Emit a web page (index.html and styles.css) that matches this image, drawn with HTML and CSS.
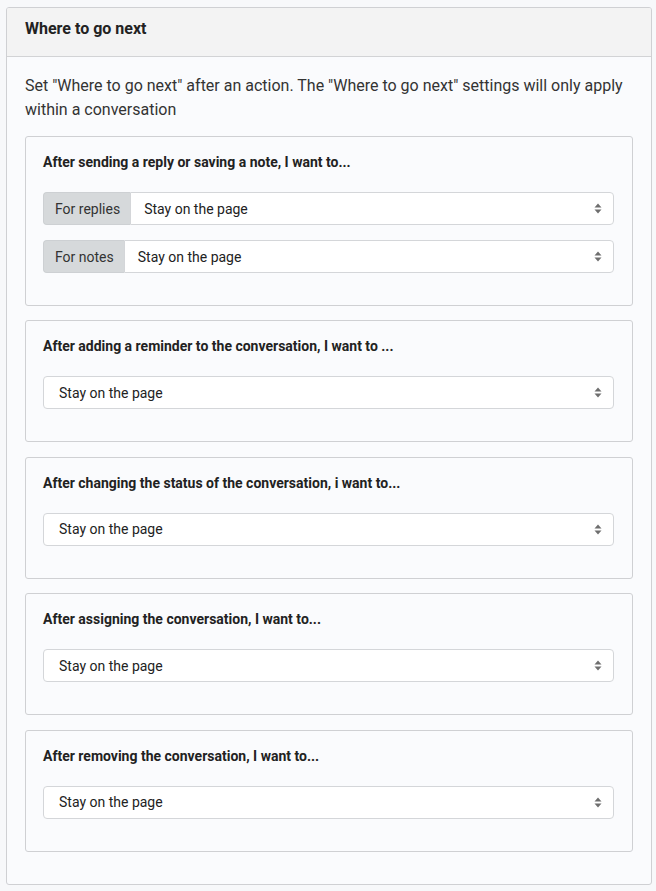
FILE: index.html
```html
<!DOCTYPE html>
<html>
<head>
<meta charset="utf-8">
<link rel="stylesheet" href="styles.css">
</head>
<body>
<div class="panel">
  <div class="panel-head">Where to go next</div>
  <div class="panel-body">
    <p class="intro">Set "Where to go next" after an action. The "Where to go next" settings will only apply within a conversation</p>

    <div class="card">
      <div class="card-title">After sending a reply or saving a note, I want to...</div>
      <div class="group">
        <span class="addon">For replies</span>
        <div class="select joined"><span>Stay on the page</span><svg class="arrow" width="8" height="11" viewBox="0 0 8 11"><path d="M4 0.5L7.5 4.5H0.5Z M4 10.5L7.5 6.5H0.5Z" fill="#6e6e6e"/></svg></div>
      </div>
      <div class="group">
        <span class="addon">For notes</span>
        <div class="select joined"><span>Stay on the page</span><svg class="arrow" width="8" height="11" viewBox="0 0 8 11"><path d="M4 0.5L7.5 4.5H0.5Z M4 10.5L7.5 6.5H0.5Z" fill="#6e6e6e"/></svg></div>
      </div>
    </div>

    <div class="card">
      <div class="card-title">After adding a reminder to the conversation, I want to ...</div>
      <div class="select"><span>Stay on the page</span><svg class="arrow" width="8" height="11" viewBox="0 0 8 11"><path d="M4 0.5L7.5 4.5H0.5Z M4 10.5L7.5 6.5H0.5Z" fill="#6e6e6e"/></svg></div>
    </div>

    <div class="card">
      <div class="card-title">After changing the status of the conversation, i want to...</div>
      <div class="select"><span>Stay on the page</span><svg class="arrow" width="8" height="11" viewBox="0 0 8 11"><path d="M4 0.5L7.5 4.5H0.5Z M4 10.5L7.5 6.5H0.5Z" fill="#6e6e6e"/></svg></div>
    </div>

    <div class="card">
      <div class="card-title">After assigning the conversation, I want to...</div>
      <div class="select"><span>Stay on the page</span><svg class="arrow" width="8" height="11" viewBox="0 0 8 11"><path d="M4 0.5L7.5 4.5H0.5Z M4 10.5L7.5 6.5H0.5Z" fill="#6e6e6e"/></svg></div>
    </div>

    <div class="card">
      <div class="card-title">After removing the conversation, I want to...</div>
      <div class="select"><span>Stay on the page</span><svg class="arrow" width="8" height="11" viewBox="0 0 8 11"><path d="M4 0.5L7.5 4.5H0.5Z M4 10.5L7.5 6.5H0.5Z" fill="#6e6e6e"/></svg></div>
    </div>
  </div>
</div>
</body>
</html>
```

FILE: styles.css
```css
* { box-sizing: border-box; }
html, body { margin: 0; padding: 0; }
body {
  background: #f7f8fa;
  font-family: Roboto, "Liberation Sans", sans-serif;
  color: #222;
  padding: 7px 4px 0 6px;
}
.panel {
  border: 1px solid #cfd0d3;
  border-radius: 3px;
  background: #fafbfd;
  overflow: hidden;
}
.panel-head {
  background: #f3f3f3;
  border-bottom: 1px solid #d2d3d5;
  padding: 9px 18px 15px;
  font-size: 16px;
  font-weight: 700;
  line-height: 24px;
  color: #222;
}
.panel-body {
  padding: 17px 18px 18px 18px;
}
.intro {
  margin: 0 0 14px;
  font-size: 16px;
  line-height: 24px;
  color: #333;
}
.card {
  border: 1px solid #cfd0d3;
  border-radius: 3px;
  background: #fafbfd;
  padding: 15px 18px 32px 17px;
  margin-bottom: 14.4px;
}
.card-title {
  font-size: 14px;
  font-weight: 700;
  line-height: 21px;
  color: #222;
  margin-bottom: 19px;
}
.group {
  display: flex;
  height: 33px;
  margin-bottom: 15px;
}
.group:last-child { margin-bottom: 0; }
.addon {
  display: flex;
  align-items: center;
  padding: 0 10px 0 11px;
  background: #d6d9db;
  border: 1px solid #cdd0d3;
  border-right: none;
  border-radius: 4px 0 0 4px;
  font-size: 14px;
  color: #333;
}
.select {
  display: flex;
  align-items: center;
  justify-content: space-between;
  height: 33px;
  background: #fff;
  border: 1px solid #d4d6d9;
  border-radius: 4px;
  padding: 0 11px 0 15px;
  font-size: 14px;
  color: #222;
}
.select.joined {
  flex: 1;
  border-radius: 0 4px 4px 0;
  padding-left: 13px;
}
.arrow { display: block; }
```
